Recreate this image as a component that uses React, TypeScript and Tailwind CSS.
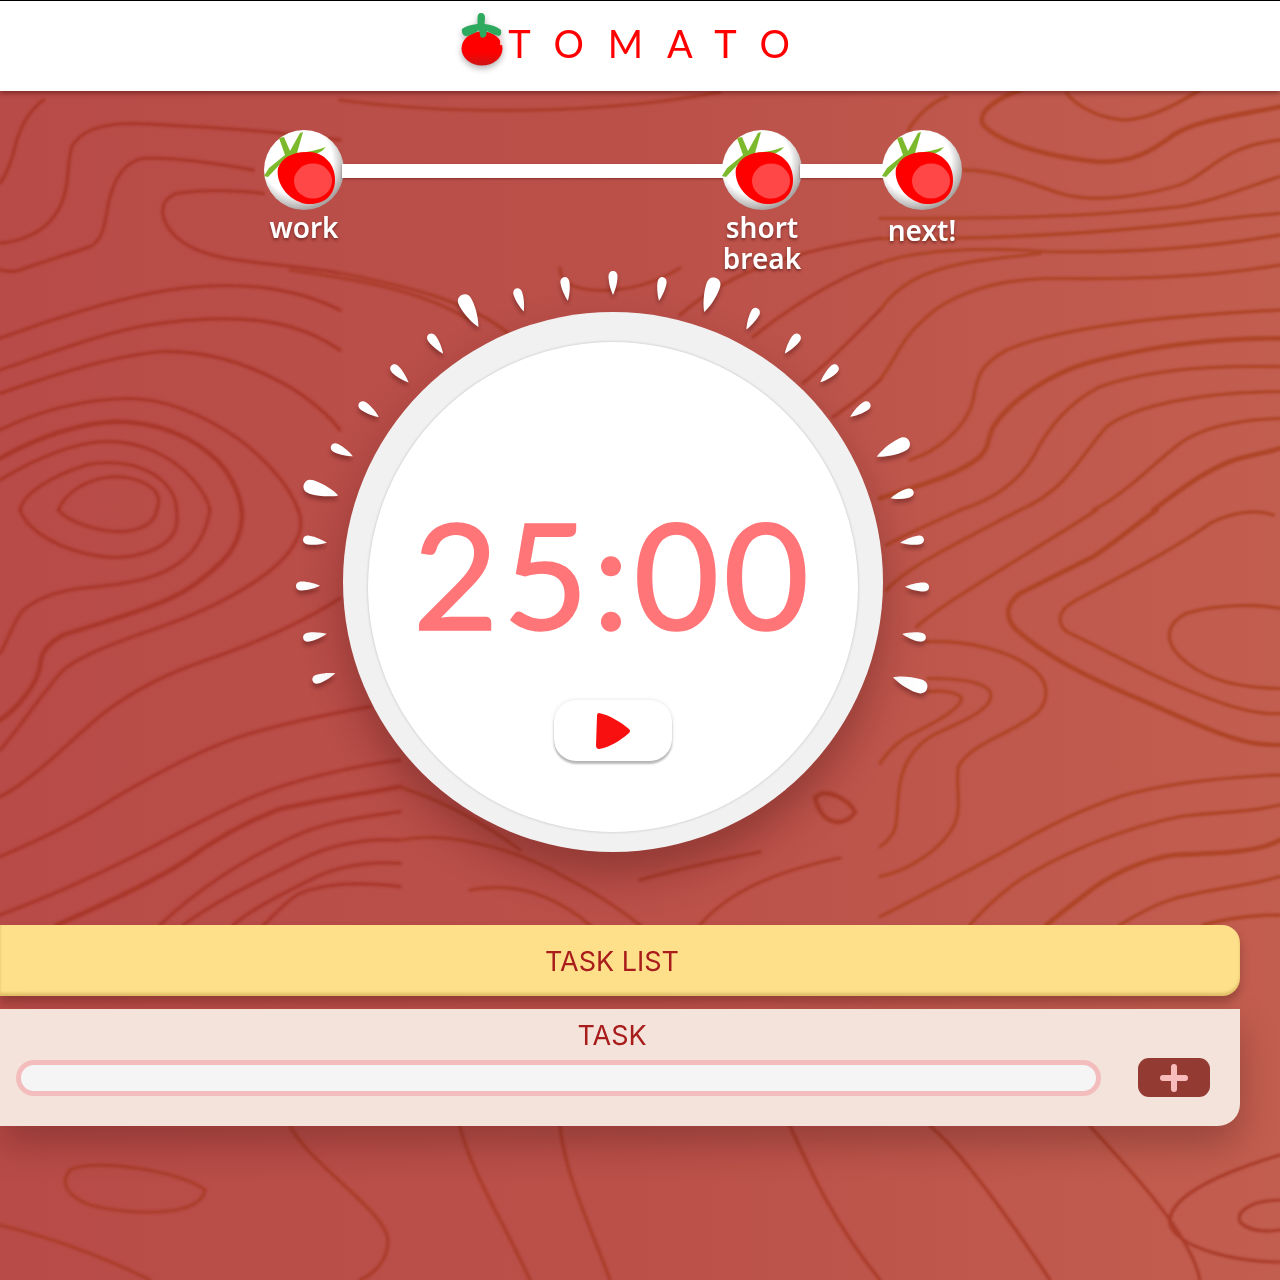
// contour lines traced per crop, in 3x crop coordinates (see the <g> transforms below)
const topLeft = [
  "M130 30C90 60 60 110 45 170C35 215 20 250 0 280",
  "M1020 150C800 120 600 110 400 100C300 100 240 125 215 170C200 220 210 290 180 350C150 410 90 450 0 460",
  "M760 240C650 220 520 200 430 205C370 215 340 270 325 340C315 400 310 450 270 470C200 495 110 520 60 540C40 548 20 545 0 540",
  "M790 310C700 300 600 300 530 310C490 325 475 360 500 405C530 460 600 490 680 505C800 525 920 530 1020 550",
  "M0 745C150 690 300 640 450 610C600 580 760 580 860 605C930 620 980 640 1020 660",
  "M0 840C150 790 300 730 450 705C600 680 750 680 850 705C930 725 980 755 1020 780",
  "M0 910C150 860 320 800 480 785C620 780 740 820 850 880C930 925 990 980 1020 1020",
  "M0 1020C100 970 230 930 380 925C500 925 620 980 720 1050C800 1110 870 1190 895 1260",
  "M0 1170C100 1110 210 1060 310 1055C420 1050 520 1100 580 1170C610 1205 625 1235 630 1260",
  "M60 1260C70 1210 150 1160 260 1125C360 1105 440 1130 490 1175C520 1205 530 1235 530 1260",
  "M175 1260C200 1200 270 1165 340 1160C400 1160 450 1180 470 1210C480 1230 475 1250 470 1260",
];
const topLeftThick = ["M0 1105C100 1050 220 1000 350 995C470 995 580 1040 650 1110C690 1150 720 1210 725 1260"];

const lowLeft = [
  "M175 0C200 30 270 60 350 65C420 65 465 40 470 0",
  "M60 0C80 60 180 125 310 140C400 150 500 120 525 60C535 35 530 15 530 0",
  "M630 0C620 60 590 130 520 170C450 215 350 225 240 235C170 245 110 265 70 300C40 330 30 380 0 430",
  "M895 0C920 60 880 130 800 190C720 250 600 310 470 355C370 390 250 430 190 480C140 530 70 640 0 720",
  "M1020 265C920 330 770 400 620 450C500 490 400 540 310 610C200 700 100 810 0 860",
  "M1110 590C1000 610 850 640 720 680C600 720 470 790 350 860C250 925 120 990 0 1040",
  "M1200 750C1050 770 880 810 760 860C640 910 520 980 400 1040C260 1110 120 1170 0 1215",
  "M1200 905C1100 920 990 930 880 980C750 1040 600 1130 480 1245",
  "M1200 990C1100 985 1000 1000 900 1050C800 1100 650 1170 550 1245",
  "M1200 1060C1120 1055 1030 1065 950 1100C850 1150 750 1200 700 1245",
  "M1200 1130C1120 1120 1000 1110 900 1150C860 1170 820 1220 790 1245",
];
const lowLeftThick = [
  "M725 0C730 50 710 110 670 150C620 200 570 240 500 270C420 305 300 340 190 375C140 400 120 430 120 470C110 520 60 590 0 630",
  "M1200 830C1100 850 950 870 830 900C730 940 640 990 560 1050C470 1110 320 1180 170 1245",
];

const topRight = [
  "M200 20C150 40 110 80 85 120",
  "M560 10C590 50 660 85 730 90C800 90 880 50 960 0",
  "M250 240C360 240 450 280 540 310C640 340 780 320 900 285C990 250 1020 170 1200 150",
  "M0 385C300 385 600 385 900 350C1000 335 1100 290 1200 260",
  "M0 445C300 450 700 430 1000 390C1080 380 1150 375 1200 370",
  "M0 520C100 480 300 470 500 485C750 490 1000 470 1200 435",
  "M0 660C50 590 120 545 250 520C330 505 400 500 480 490",
  "M0 870C50 800 70 740 130 690C200 620 330 570 500 565C750 570 1000 560 1200 525",
  "M90 1110C180 1080 260 1010 280 930C290 850 310 820 380 780C520 720 800 680 1200 660",
  "M240 1260C340 1230 420 1170 460 1100C500 1020 560 940 660 890C800 840 1000 825 1200 830",
  "M420 1260C560 1200 600 1100 680 1010C760 950 950 905 1200 905",
  "M640 1260C740 1210 820 1120 900 1060C970 1010 1080 990 1200 985",
];
const topRightThick = [
  "M420 0C340 30 290 70 310 105C360 160 500 200 650 215C760 220 820 180 880 135C950 90 1080 75 1200 50",
  "M0 1225C100 1190 230 1160 300 1100C330 1070 320 1050 340 1010C400 920 520 850 620 820C800 770 1000 745 1200 745",
  "M820 1260C900 1200 1000 1120 1100 1100C1140 1090 1170 1085 1200 1075",
];

const lowRight = [
  "M20 105C100 60 180 30 240 0",
  "M20 240C80 170 250 90 420 0",
  "M110 350C200 270 450 130 650 0",
  "M1180 15C1120 -5 1050 10 990 40C880 120 700 210 590 270C530 300 530 340 560 365C680 420 830 510 1000 570C1080 600 1150 615 1200 610",
  "M1200 295C1120 280 1000 285 920 310C860 340 850 390 900 440C960 500 1060 535 1200 535",
  "M140 395C260 390 380 420 450 470C510 510 510 570 470 610C400 670 270 700 235 770C225 830 250 890 220 950C180 1020 90 1080 0 1100",
  "M145 505C210 505 310 510 330 545C350 590 260 630 170 670C90 710 60 780 55 860C50 920 50 960 35 975C20 995 10 1005 0 1010",
  "M145 545C180 540 235 545 245 565C240 600 160 640 80 680C50 700 20 730 0 760",
  "M1200 795C1050 800 850 820 720 860C600 900 480 960 380 1020C250 1090 100 1170 0 1220",
  "M1200 885C1100 910 1000 905 900 920C750 950 560 1020 420 1110C360 1150 300 1210 270 1245",
  "M1200 1100C1100 1130 960 1140 870 1170C810 1190 760 1220 720 1245",
  "M1200 1215C1120 1215 1040 1225 970 1245",
];
const lowRightThick = [
  "M830 0C760 50 700 100 640 140C560 180 480 220 420 250C380 280 370 320 410 360C500 440 620 500 760 560C880 610 1000 670 1080 690C1130 705 1170 705 1200 705",
  "M1200 990C1130 1030 1000 1030 880 1035C780 1050 680 1100 620 1150C580 1180 540 1210 500 1245",
];

// page coordinates: middle strip and the part under the task panel
const middle = [
  "M340 273C400 285 470 300 510 335",
  "M290 270C360 280 420 290 470 320",
  "M560 268C560 285 580 292 612 290C640 288 660 280 680 268",
  "M680 315C720 280 770 255 880 238",
  "M753 337C780 315 830 280 880 263",
  "M803 383C830 362 860 330 880 310",
  "M833 417C850 405 865 395 880 380",
  "M340 100C450 115 600 115 720 92",
  "M400 787C440 800 480 820 520 850",
  "M400 840C450 830 520 850 570 880C600 895 620 910 640 925",
  "M470 890C520 880 560 900 590 925",
  "M640 880C680 868 720 860 760 852",
  "M700 925C730 890 780 870 840 858",
  "M70 1170C90 1158 180 1170 205 1190C200 1218 130 1215 90 1205C65 1195 60 1182 70 1170Z",
  "M0 1225C60 1240 110 1260 150 1280",
  "M290 1126C310 1165 385 1210 388 1240C388 1262 372 1275 360 1280",
  "M460 1126C470 1170 500 1215 530 1280",
  "M560 1126C565 1175 590 1225 610 1280",
  "M790 1126C810 1170 835 1225 880 1280",
  "M930 1126C960 1150 1010 1220 1050 1280",
  "M1090 1126C1120 1160 1190 1230 1200 1280",
  "M1280 1155C1230 1170 1165 1195 1170 1225C1180 1250 1240 1262 1280 1262",
  "M1280 1200C1255 1200 1235 1210 1240 1222C1250 1232 1265 1232 1280 1230",
];

const ticks = [
  { x: 470, y: 311, big: true },
  { x: 520, y: 300 },
  { x: 566, y: 289 },
  { x: 613, y: 283 },
  { x: 661, y: 289 },
  { x: 710, y: 295, big: true },
  { x: 752, y: 319 },
  { x: 792, y: 344 },
  { x: 829, y: 374 },
  { x: 860, y: 410 },
  { x: 893, y: 449, big: true },
  { x: 902, y: 495 },
  { x: 912, y: 541 },
  { x: 917, y: 587 },
  { x: 914, y: 636 },
  { x: 910, y: 683, big: true },
  { x: 324, y: 677 },
  { x: 315, y: 636 },
  { x: 308, y: 586 },
  { x: 315, y: 541 },
  { x: 321, y: 490, big: true },
  { x: 342, y: 451 },
  { x: 369, y: 410 },
  { x: 400, y: 374 },
  { x: 436, y: 344 },
];

function Lines({ thin, thick, transform, color }: { thin: string[]; thick: string[]; transform: string; color: string }) {
  return (
    <g transform={transform} stroke={color} strokeLinecap="round" strokeLinejoin="round">
      {thin.map((d) => (
        <path key={d} d={d} strokeWidth="10" />
      ))}
      {thick.map((d) => (
        <path key={d} d={d} strokeWidth="14" />
      ))}
    </g>
  );
}

function Contours() {
  return (
    <svg viewBox="0 91 1280 1189" className="pointer-events-none absolute inset-0 h-full w-full" fill="none">
      <defs>
        <filter id="soft" x="-5%" y="-5%" width="110%" height="110%">
          <feGaussianBlur stdDeviation="0.8" />
        </filter>
      </defs>
      <g filter="url(#soft)">
        <Lines thin={topLeft} thick={topLeftThick} transform="translate(0 90) scale(0.3333)" color="#a9372c" />
        <Lines thin={lowLeft} thick={lowLeftThick} transform="translate(0 510) scale(0.3333)" color="#a9372c" />
        <Lines thin={topRight} thick={topRightThick} transform="translate(880 90) scale(0.3333)" color="#ae4428" />
        <Lines thin={lowRight} thick={lowRightThick} transform="translate(880 510) scale(0.3333)" color="#ae4428" />
        <g stroke="#aa3c2a" strokeWidth="3.2" strokeLinecap="round">
          {middle.map((d) => (
            <path key={d} d={d} />
          ))}
          <path d="M815 798C825 786 850 800 855 812C845 828 822 826 815 798Z" strokeWidth="4.5" />
        </g>
      </g>
    </svg>
  );
}

function StepTomato() {
  return (
    <svg viewBox="0 0 80 80" className="block h-20 w-20">
      <defs>
        <radialGradient id="stepBall" cx="0.42" cy="0.38" r="0.62">
          <stop offset="0.7" stopColor="#ffffff" />
          <stop offset="1" stopColor="#a9a5a3" />
        </radialGradient>
      </defs>
      <circle cx="40" cy="40" r="40" fill="url(#stepBall)" />
      <path d="M21 25L15 8L20 7L26 21L36 3L39 2L33 23Q48 22 62 17Q56 25 40 26Q28 28 20 30L4 47L0 46L5 38Z" fill="#7cb92c" />
      <path d="M14 38C18 27 30 21 46 22C60 23 71 34 71 50C71 65 60 75 44 74C28 73 11 56 14 38Z" fill="#ff0000" />
      <ellipse cx="49" cy="51" rx="19" ry="17.5" fill="#ff4747" />
    </svg>
  );
}

function Step({ label, labelClass }: { label: string; labelClass?: string }) {
  return (
    <div className="flex w-20 shrink-0 flex-col items-center">
      <StepTomato />
      <span className={`-mx-4 text-center font-['Noto_Sans',sans-serif] text-[28px] font-semibold leading-[31px] text-white [text-shadow:0_2px_3px_rgba(80,20,20,0.6)] ${labelClass ?? "mt-[2px]"}`}>
        {label}
      </span>
    </div>
  );
}

function Ticks() {
  return (
    <svg viewBox="283 252 660 660" className="pointer-events-none absolute -left-[60px] -top-[60px] h-[660px] w-[660px] drop-shadow-[0_4px_2px_rgba(70,15,15,0.4)]">
      {ticks.map((t) => {
        const angle = (Math.atan2(t.y - 582, t.x - 613) * 180) / Math.PI + 90;
        const d = t.big
          ? "M0 18C-3 13 -7 1 -7 -10C-7 -15.5 -3.8 -18 0 -18C3.8 -18 7 -15.5 7 -10C7 1 3 13 0 18Z"
          : "M0 12C-2 8 -4.5 0 -4.5 -6.5C-4.5 -10.2 -2.4 -12 0 -12C2.4 -12 4.5 -10.2 4.5 -6.5C4.5 0 2 8 0 12Z";
        return <path key={`${t.x}-${t.y}`} d={d} fill="#ffffff" transform={`translate(${t.x} ${t.y}) rotate(${angle})`} />;
      })}
    </svg>
  );
}

export default function App() {
  return (
    <div className="flex h-[1280px] w-[1280px] flex-col overflow-hidden font-['Lato',sans-serif]">
      <header className="relative z-10 flex h-[91px] shrink-0 items-start justify-center border-t border-black bg-white pr-[10px] pt-[10px] shadow-[0_2px_5px_rgba(60,0,0,0.5)]">
        <svg viewBox="0 0 50 62" className="ml-[1px] mt-[1px] h-[62px] w-[50px] shrink-0 drop-shadow-[0_3px_3px_rgba(0,0,0,0.3)]">
          <defs>
            <linearGradient id="logoBody" x1="0" y1="0" x2="0" y2="1">
              <stop offset="0.6" stopColor="#ff0000" />
              <stop offset="1" stopColor="#cf1414" />
            </linearGradient>
          </defs>
          <ellipse cx="25" cy="36.5" rx="20.5" ry="17" fill="url(#logoBody)" />
          <path d="M24 1Q28 1 28 6L27.5 12Q38 13 44 18Q45 23 42 24Q36 23 30 19L29 24Q26 27 23.5 25L22 18Q14 24 8 24Q4 22 5 17Q10 13 20.5 12L20.5 6Q20.5 1 24 1Z" fill="#2eaa5e" />
          <path d="M43 24Q45 28 44 33" stroke="#ffd6d6" strokeWidth="1.8" fill="none" />
        </svg>
        <h1 className="ml-[1px] mt-[9px] text-[38px] font-normal leading-[46px] tracking-[24px] text-[#ff0000]">TOMATO</h1>
      </header>

      <main className="relative flex flex-1 flex-col bg-[linear-gradient(90deg,#b84b47_0%,#bb5049_50%,#c25e50_100%)] pt-[39px]">
        <Contours />

        <div className="relative flex h-[182px] items-start pl-[264px]">
          <Step label="work" />
          <div className="-mx-[2px] mt-[34px] h-[14px] w-[382px] shrink-0 bg-white shadow-[0_1px_2px_rgba(80,20,20,0.5)]" />
          <Step label="short break" />
          <div className="-mx-[2px] mt-[34px] h-[14px] w-[84px] shrink-0 bg-white shadow-[0_1px_2px_rgba(80,20,20,0.5)]" />
          <Step label="next!" labelClass="mt-[5px]" />
        </div>

        <div className="relative ml-[343px] h-[540px] w-[540px] shrink-0">
          <Ticks />
          <div className="relative flex h-full w-full items-center justify-center rounded-full bg-[#f1f1f1] shadow-[0_22px_40px_rgba(70,15,15,0.35)]">
            <div className="mt-[10px] flex h-[490px] w-[490px] flex-col items-center rounded-full bg-white pt-[141px] shadow-[0_0_3px_rgba(0,0,0,0.22)]">
              <span className="text-[148px] font-normal leading-[180px] tracking-[4px] text-[#ff7578] [-webkit-text-stroke:1.5px_#ff7578]">25:00</span>
              <button className="mt-[37px] flex h-[61px] w-[118px] items-center justify-center rounded-[22px] bg-white shadow-[0_3px_2px_rgba(0,0,0,0.25),0_0_4px_rgba(0,0,0,0.12)]">
                <svg viewBox="0 0 36 38" className="h-[38px] w-[36px]">
                  <path d="M4 1Q2 1 2 4L1 33Q1 37 4 37C14 36 26 28 34 21Q36 19 34 17C26 10 14 3 4 1Z" fill="#f81010" />
                </svg>
              </button>
            </div>
          </div>
        </div>

        <section className="relative mt-[73px] flex w-[1240px] flex-col gap-[13px] font-['Inter',sans-serif]">
          <div className="flex h-[71px] items-center justify-center rounded-r-[18px] bg-[#fee08b] pr-[16px] pt-[1px] text-[27px] leading-none text-[#a81c1c] shadow-[inset_0_-3px_3px_rgba(170,130,40,0.35),0_6px_10px_rgba(50,10,10,0.28)]">
            TASK LIST
          </div>
          <div className="flex h-[117px] flex-col rounded-br-[22px] bg-[#f4e3da] pt-[12px] shadow-[0_18px_36px_rgba(50,10,10,0.28)]">
            <div className="pr-[16px] text-center text-[27px] leading-[30px] text-[#a81c1c]">TASK</div>
            <div className="mt-[7px] flex items-center pl-[16px]">
              <input className="h-[36px] w-[1085px] rounded-full border-[5px] border-[#f4bdbd] bg-[#f5f5f5] outline-none" />
              <button className="ml-[37px] flex h-[39px] w-[72px] items-center justify-center rounded-[11px] bg-[#933a32]">
                <svg viewBox="0 0 28 28" className="h-[28px] w-[28px]">
                  <path d="M14 3V25M3 14H25" stroke="#f9bcbc" strokeWidth="6" strokeLinecap="round" />
                </svg>
              </button>
            </div>
          </div>
        </section>
      </main>
    </div>
  );
}
